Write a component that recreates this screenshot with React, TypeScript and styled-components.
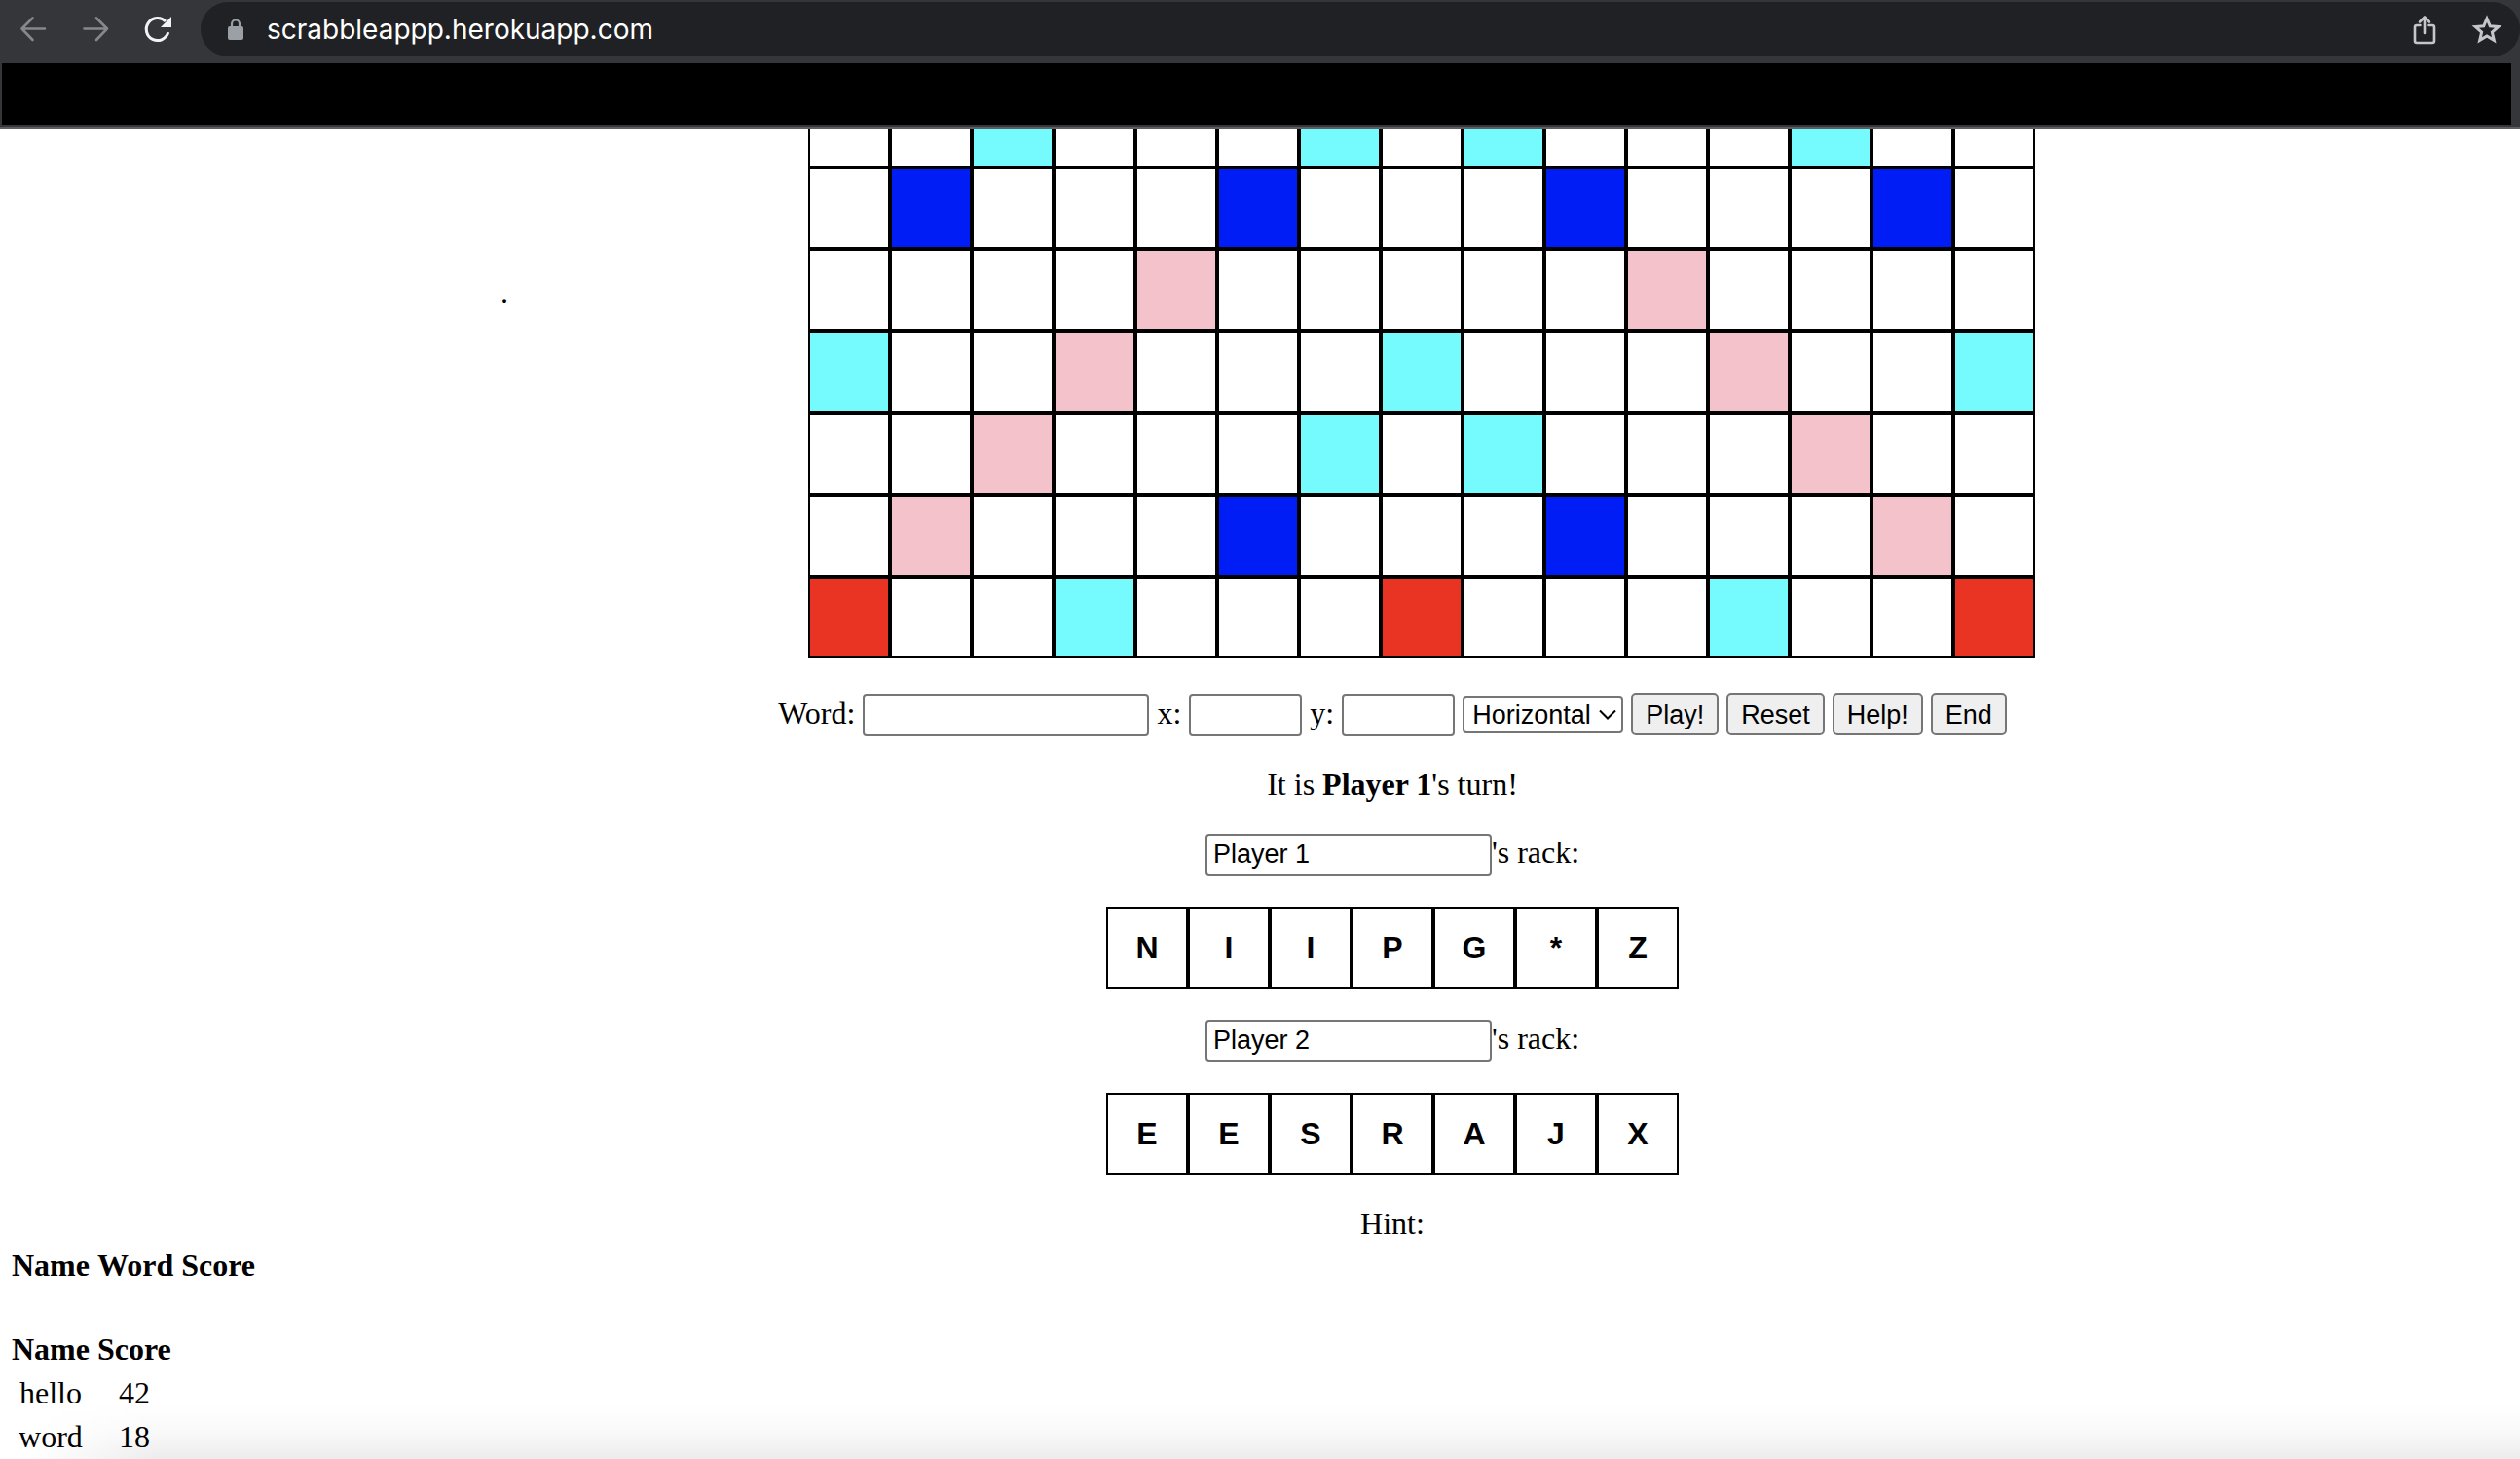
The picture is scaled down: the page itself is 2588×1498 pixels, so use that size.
import React, { useState } from "react";
import styled, { createGlobalStyle } from "styled-components";

const GlobalStyle = createGlobalStyle`
  * { box-sizing: border-box; }
  body {
    margin: 0;
    background: #fff;
    color: #000;
    font: 32px/37px "Liberation Serif", "Times New Roman", serif;
  }
`;

const Window = styled.div`
  position: relative;
  display: flex;
  flex-direction: column;
  height: 100vh;
  overflow: hidden;
`;

const Chrome = styled.header`
  flex: none;
  background: #35363a;
  border-bottom: 2px solid #5d5e62;
  padding: 2px 0;
`;

const Toolbar = styled.div`
  display: flex;
  align-items: center;
  height: 56px;
  padding-left: 18px;
`;

const NavButton = styled.button<{ $color: string }>`
  display: flex;
  width: 32px;
  height: 32px;
  margin-right: 32px;
  padding: 0;
  border: 0;
  background: none;
  color: ${(p) => p.$color};
`;

const AddressBar = styled.div`
  flex: 1;
  display: flex;
  align-items: center;
  height: 56px;
  margin-left: -4px;
  padding: 0 18px 0 24px;
  border-radius: 28px;
  background: #202124;
`;

const Address = styled.input`
  flex: 1;
  min-width: 0;
  margin-left: 20px;
  padding: 0;
  border: 0;
  outline: 0;
  background: none;
  color: #fff;
  font: 28px/36px Inter, "Liberation Sans", sans-serif;
`;

const BarActions = styled.div`
  display: flex;
  gap: 32px;
`;

const BarButton = styled.button`
  display: flex;
  width: 32px;
  height: 32px;
  padding: 0;
  border: 0;
  background: none;
  color: #c4c6c8;
`;

const Bookmarks = styled.div`
  height: 63px;
  margin: 7px 9px 0 2px;
  background: #000;
`;

const Game = styled.main`
  flex: none;
  display: flex;
  justify-content: center;
`;

const Side = styled.aside`
  width: 272px;
  padding: 150px 0 0 16px;
`;

const Play = styled.section`
  display: flex;
  flex-direction: column;
  align-items: center;
  gap: 32px;
  width: 1320px;
`;

const Board = styled.div`
  align-self: flex-end;
  margin-bottom: 4px;
`;

const Row = styled.div<{ $clipped?: boolean }>`
  display: flex;
  align-items: flex-end;
  height: ${(p) => (p.$clipped ? "40px" : "84px")};
  overflow: hidden;
`;

const Cell = styled.div<{ $color?: string }>`
  flex: none;
  display: flex;
  align-items: center;
  justify-content: center;
  width: 84px;
  height: 84px;
  border: 2px solid #000;
  background: ${(p) => p.$color || "#fff"};
  font: bold 32px/37px "Liberation Sans", Arial, sans-serif;
`;

const Line = styled.form`
  display: flex;
  align-items: baseline;
  gap: 8px;
  height: 43px;
`;

const Text = styled.p`
  margin: 0;
`;

const RackLine = styled.div`
  display: flex;
  align-items: baseline;
  height: 43px;
`;

const Field = styled.input<{ $width: number }>`
  width: ${(p) => p.$width}px;
  height: 43px;
  padding: 2px 6px;
  border: 2px solid #767676;
  border-radius: 4px;
  background: #fff;
  color: #000;
  font: 27px/30px "Liberation Sans", Arial, sans-serif;
`;

const SelectBox = styled.span`
  position: relative;
  display: inline-flex;
  align-items: center;
`;

const Select = styled.select`
  appearance: none;
  width: 165px;
  height: 38px;
  padding: 0 8px;
  border: 2px solid #767676;
  border-radius: 4px;
  background: #fff;
  color: #000;
  font: 27px/30px "Liberation Sans", Arial, sans-serif;
`;

const Chevron = styled.svg`
  position: absolute;
  right: 7px;
  width: 18px;
  height: 12px;
  pointer-events: none;
`;

const Button = styled.button`
  height: 43px;
  padding: 0 13px;
  border: 2px solid #767676;
  border-radius: 5px;
  background: #efefef;
  color: #000;
  font: 27px/30px "Liberation Sans", Arial, sans-serif;
`;

const Scores = styled.section`
  padding-left: 6px;
`;

const Table = styled.table`
  margin-bottom: 37px;
  border-spacing: 4px;
  text-align: center;

  th,
  td {
    padding: 2px;
  }
`;

const DockShade = styled.div`
  position: absolute;
  right: 0;
  bottom: 0;
  left: 0;
  height: 56px;
  background: linear-gradient(to bottom, rgba(0, 0, 0, 0), rgba(0, 0, 0, 0.025) 50%, rgba(0, 0, 0, 0.075));
  mask-image: linear-gradient(to right, transparent 32px, #000 160px);
  pointer-events: none;
`;

const COLORS: Record<string, string> = {
  c: "#75fbfd",
  b: "#001df5",
  p: "#f4c2cb",
  r: "#e93323",
};

const ROWS = [
  "..c...c.c...c..",
  ".b...b...b...b.",
  "....p.....p....",
  "c..p...c...p..c",
  "..p...c.c...p..",
  ".p...b...b...p.",
  "r..c...r...c..r",
];

const PLAYERS = [
  { name: "Player 1", tiles: "NIIPG*Z" },
  { name: "Player 2", tiles: "EESRAJX" },
];

const HIGH_SCORES = [
  { name: "hello", score: 42 },
  { name: "word", score: 18 },
];

const stroke = {
  width: 32,
  height: 32,
  viewBox: "0 0 32 32",
  fill: "none",
  stroke: "currentColor",
  strokeWidth: 2.6,
  strokeLinecap: "round" as const,
  strokeLinejoin: "round" as const,
};

const ArrowLeft = () => (
  <svg {...stroke}>
    <path d="M28 15.500H4.500M15.500 4.500 4.500 15.500l11 11.500" />
  </svg>
);

const ArrowRight = () => (
  <svg {...stroke}>
    <path d="M4.500 15.500h23.500M17 4.500 28 15.500 17 27" />
  </svg>
);

const Reload = () => (
  <svg {...stroke} strokeWidth={3} strokeLinecap="butt">
    <path d="M26.800 19.200A11.500 11.500 0 1 1 24 8" />
    <path d="M30 3v11H19z" fill="currentColor" stroke="none" />
  </svg>
);

const Lock = () => (
  <svg width="24" height="24" viewBox="0 0 24 24">
    <rect x="4" y="9" width="16" height="14" rx="2" fill="#9aa0a6" />
    <path d="M8 10V6.500a4 4 0 0 1 8 0V10" fill="none" stroke="#9aa0a6" strokeWidth="2.200" />
  </svg>
);

const Share = () => (
  <svg {...stroke}>
    <path d="M11.500 12H8a2 2 0 0 0-2 2v14a2 2 0 0 0 2 2h16a2 2 0 0 0 2-2V14a2 2 0 0 0-2-2h-3.500" />
    <path d="M16 20V4M11 8.500 16 3.500l5 5" />
  </svg>
);

const Star = () => (
  <svg {...stroke} strokeWidth={3} strokeLinejoin="miter">
    <path d="m16 5 3.300 7.800 8.500.7-6.400 5.600 1.900 8.200L16 22.900l-7.300 4.400 1.900-8.200-6.400-5.600 8.500-.7z" />
  </svg>
);

export default function App() {
  const [names, setNames] = useState(PLAYERS.map((p) => p.name));
  const rename = (index: number, value: string) =>
    setNames(names.map((n, i) => (i === index ? value : n)));

  return (
    <Window>
      <GlobalStyle />
      <Chrome>
        <Toolbar>
          <NavButton $color="#87888b" aria-label="Back"><ArrowLeft /></NavButton>
          <NavButton $color="#87888b" aria-label="Forward"><ArrowRight /></NavButton>
          <NavButton $color="#f1f3f4" aria-label="Reload"><Reload /></NavButton>
          <AddressBar>
            <Lock />
            <Address aria-label="Address" defaultValue="scrabbleappp.herokuapp.com" />
            <BarActions>
              <BarButton aria-label="Share"><Share /></BarButton>
              <BarButton aria-label="Bookmark"><Star /></BarButton>
            </BarActions>
          </AddressBar>
        </Toolbar>
        <Bookmarks />
      </Chrome>

      <Game>
        <Side>.</Side>
        <Play>
          <Board>
            {ROWS.map((row, y) => (
              <Row key={y} $clipped={y === 0}>
                {row.split("").map((kind, x) => (
                  <Cell key={x} $color={COLORS[kind]} />
                ))}
              </Row>
            ))}
          </Board>

          <Line onSubmit={(e) => e.preventDefault()}>
            <label htmlFor="word">Word:</label>
            <Field id="word" $width={294} />
            <label htmlFor="x">x:</label>
            <Field id="x" $width={116} />
            <label htmlFor="y">y:</label>
            <Field id="y" $width={116} />
            <SelectBox>
              <Select aria-label="Direction" defaultValue="Horizontal">
                <option>Horizontal</option>
                <option>Vertical</option>
              </Select>
              <Chevron viewBox="0 0 18 12" fill="none" stroke="#000" strokeWidth="2">
                <path d="m1 1.500 8 8 8-8" />
              </Chevron>
            </SelectBox>
            <Button type="submit">Play!</Button>
            <Button type="reset">Reset</Button>
            <Button type="button">Help!</Button>
            <Button type="button">End</Button>
          </Line>

          <Text>
            It is <b>{names[0]}</b>'s turn!
          </Text>

          {PLAYERS.map((player, i) => (
            <React.Fragment key={player.name}>
              <RackLine>
                <Field
                  id={`player-${i}`}
                  $width={294}
                  value={names[i]}
                  onChange={(e) => rename(i, e.target.value)}
                />
                <label htmlFor={`player-${i}`}>'s rack:</label>
              </RackLine>
              <Row>
                {player.tiles.split("").map((letter, x) => (
                  <Cell key={x}>{letter}</Cell>
                ))}
              </Row>
            </React.Fragment>
          ))}

          <Text>Hint:</Text>
        </Play>
      </Game>

      <Scores>
        <Table>
          <thead>
            <tr>
              <th>Name</th>
              <th>Word</th>
              <th>Score</th>
            </tr>
          </thead>
        </Table>
        <Table>
          <thead>
            <tr>
              <th>Name</th>
              <th>Score</th>
            </tr>
          </thead>
          <tbody>
            {HIGH_SCORES.map((entry) => (
              <tr key={entry.name}>
                <td>{entry.name}</td>
                <td>{entry.score}</td>
              </tr>
            ))}
          </tbody>
        </Table>
      </Scores>
      <DockShade />
    </Window>
  );
}
